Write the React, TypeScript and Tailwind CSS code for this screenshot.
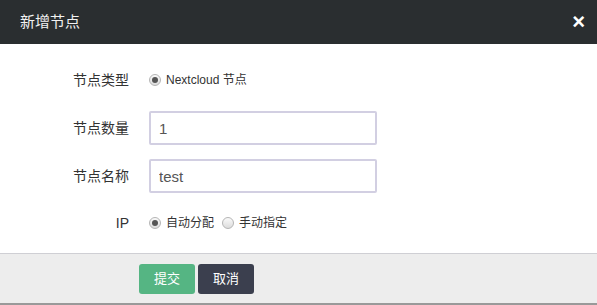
const font = "font-['Liberation_Sans','Noto_Sans_CJK_SC',sans-serif]";

const Radio = ({ checked, label }: { checked: boolean; label: string }) => (
  <label className="flex items-center gap-[5px] text-[12px] text-[#333]">
    <span className="flex h-[12px] w-[12px] items-center justify-center rounded-full border border-[#b5b5b5] bg-gradient-to-b from-[#fafafa] to-[#dcdcdc]">
      {checked && <span className="h-[6px] w-[6px] rounded-full bg-[#555]" />}
    </span>
    {label}
  </label>
);

const Row = ({ label, children }: { label: string; children: React.ReactNode }) => (
  <div className="flex h-[34px] items-center gap-[20px]">
    <div className="w-[129px] text-right text-[14px] text-[#333]">{label}</div>
    {children}
  </div>
);

export default function App() {
  return (
    <div className={`${font} w-[597px] h-[305px] flex flex-col bg-white`}>
      <div className="flex h-[44px] items-center justify-between bg-[#2a2e30] pl-[20px] pr-[12px]">
        <span className="text-[15px] text-[#f2f2f2]">新增节点</span>
        <span className="text-[22px] font-bold leading-none text-white">×</span>
      </div>
      <div className="flex flex-1 flex-col gap-[14px] pt-[19px]">
        <Row label="节点类型">
          <Radio checked label="Nextcloud 节点" />
        </Row>
        <Row label="节点数量">
          <input
            defaultValue="1"
            className="h-[34px] w-[228px] rounded-[2px] border-2 border-[#d2cfe2] px-[8px] text-[15px] text-[#555] outline-none"
          />
        </Row>
        <Row label="节点名称">
          <input
            defaultValue="test"
            className="h-[34px] w-[228px] rounded-[2px] border-2 border-[#d2cfe2] px-[8px] text-[15px] text-[#555] outline-none"
          />
        </Row>
        <div className="-mt-[1px]">
          <Row label="IP">
            <div className="flex items-center gap-[8px]">
              <Radio checked label="自动分配" />
              <Radio checked={false} label="手动指定" />
            </div>
          </Row>
        </div>
      </div>
      <div className="flex h-[52px] gap-[3px] border-t border-b-2 border-t-[#cfcfd4] border-b-[#999] bg-[#ededed] pl-[139px] pt-[10px]">
        <button className="h-[30px] w-[56px] rounded-[3px] bg-[#55b583] text-[13px] text-white">提交</button>
        <button className="h-[30px] w-[56px] rounded-[3px] bg-[#3b3f4e] text-[13px] text-white">取消</button>
      </div>
    </div>
  );
}
